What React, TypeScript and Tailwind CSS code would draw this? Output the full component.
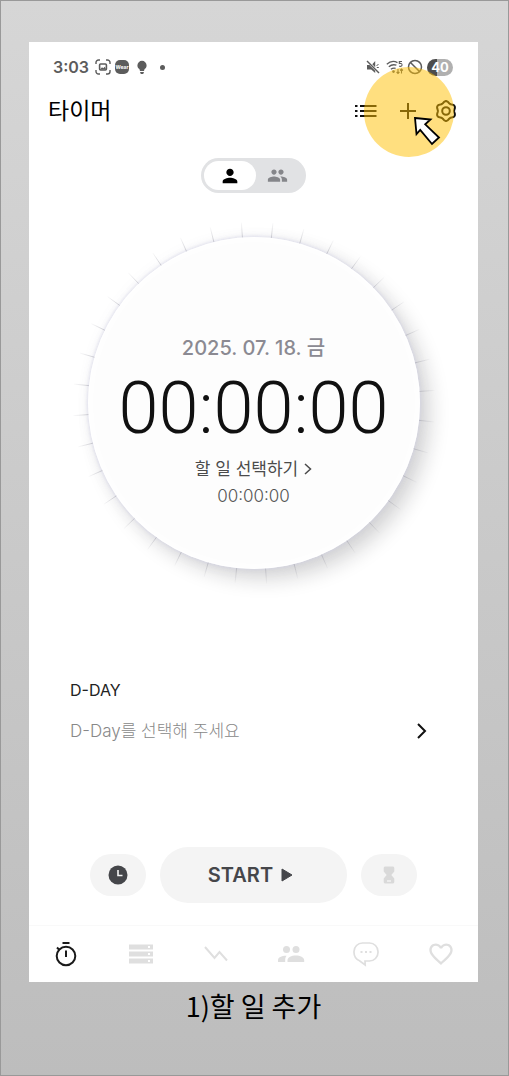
import type { ReactNode } from "react";
import { MdFavoriteBorder, MdGroup, MdPerson } from "react-icons/md";

const TICKS = Array.from({ length: 36 }, (_, i) => i * 10 - 4);

// six soft lobes around a 24px box
const GEAR =
  Array.from({ length: 72 }, (_, i) => {
    const a = (i * 5 * Math.PI) / 180;
    const r = 9 + 0.9 * Math.cos(6 * a);
    return `${i ? "L" : "M"}${(12 + r * Math.sin(a)).toFixed(2)} ${(12 - r * Math.cos(a)).toFixed(2)}`;
  }).join("") + "Z";

function StatusBar() {
  return (
    <div className="flex h-[18px] items-center justify-between pl-6 pr-[25px] text-[#5c5c5c]">
      <div className="flex items-center">
        <span className="font-[Inter] text-[16px] font-semibold leading-[18px]">3:03</span>
        <svg className="ml-[6px] h-4 w-4" viewBox="0 0 16 16" fill="none" stroke="currentColor" strokeWidth="1.4">
          <path d="M1 5V3.5A2.5 2.5 0 0 1 3.5 1H5M11 1h1.500A2.500 2.500 0 0 1 15 3.500V5M15 11v1.500a2.500 2.500 0 0 1-2.500 2.500H11M5 15H3.500A2.500 2.500 0 0 1 1 12.500V11" />
          <rect x="4.600" y="5" width="6.800" height="6" rx="1" strokeWidth="1.600" />
          <path d="M5 10.500l2-2.200 1.300 1 1.400-1.500 1.500 2.700z" fill="currentColor" stroke="none" />
        </svg>
        <span className="ml-1 flex h-[14px] w-[14px] items-center justify-center rounded-[5px] bg-[#5c5c5c] font-[Inter] text-[5px] font-bold leading-none text-white">
          Wear
        </span>
        <svg className="ml-[7px] h-[15px] w-3" viewBox="0 0 12 15" fill="currentColor">
          <path d="M6 .8a4.600 4.600 0 0 1 4.600 4.600c0 1.700-.9 2.900-2 3.700L8 11H4l-.6-1.900c-1.100-.8-2-2-2-3.700A4.600 4.600 0 0 1 6 .8zM4 12.100h4L7.200 14H4.800z" />
        </svg>
        <span className="ml-[12px] h-[5px] w-[5px] rounded-full bg-[#5c5c5c]" />
      </div>
      <div className="flex items-center">
        <svg className="h-[14px] w-[14px]" viewBox="0 0 14 14" fill="currentColor">
          <path d="M1 5h2.500l3 3 2.700 2.700V13L5.200 9.500H1zM9.200 1v6.200L6.300 4.200z" />
          <path d="M1 1l12 12" stroke="currentColor" strokeWidth="1.400" />
          <path d="M10.500 5.500l2-1M10.800 7.500h2" stroke="currentColor" strokeWidth="1" />
        </svg>
        <svg className="ml-[6px] h-4 w-[18px]" viewBox="0 0 18 16" fill="none" stroke="currentColor" strokeWidth="1.300">
          <path d="M.8 5.200C4 2.300 8 1.800 11.500 3.600M2.800 7.800c2.300-2 5-2.500 7.600-1.600M4.900 10.300c1.500-1.200 3.200-1.500 4.700-1" />
          <circle cx="7.500" cy="12.600" r="1.300" fill="currentColor" stroke="none" />
          <path d="M16 2.500h-2.700v2c1.800-.4 2.900.2 2.700 1.600-.1 1.300-1.700 1.600-2.900.9" strokeWidth="1.100" />
          <path d="M12 10v4.500M10.600 13l1.400 1.500 1.400-1.500M15.500 14.500V10M14.100 11.500l1.400-1.500 1.400 1.500" strokeWidth="1.100" />
        </svg>
        <svg className="ml-[3px] h-4 w-4" viewBox="0 0 16 16" fill="none" stroke="currentColor" strokeWidth="1.500">
          <circle cx="8" cy="8" r="6.500" />
          <path d="M3.500 3.500l9 9" />
        </svg>
        <span className="ml-1 flex h-[17px] w-[26px] items-center justify-center rounded-full bg-linear-to-r from-[#4d4d4d] from-40% to-[#b0b0b0] to-40% font-[Inter] text-[13px] font-bold leading-none text-white">
          40
        </span>
      </div>
    </div>
  );
}

function Header() {
  return (
    <header className="mt-[15px] flex h-10 items-center justify-between pl-[19px] pr-5">
      <h1 className="text-[23px] font-normal leading-8 text-[#000]">타이머</h1>
      <div className="flex items-center">
        <button type="button" aria-label="목록" className="block">
          <svg className="h-6 w-6" viewBox="0 0 24 24" stroke="#111" strokeWidth="2">
            <path d="M1 7h2.500M6 7h16.500M1 12h2.500M6 12h16.500M1 17h2.500M6 17h16.500" />
          </svg>
        </button>
        <div className="relative ml-[18px]">
          <button type="button" aria-label="할 일 추가" className="block">
            <svg className="h-6 w-6" viewBox="0 0 24 24" stroke="#111" strokeWidth="2">
              <path d="M12 4v16M4 12h16" />
            </svg>
          </button>
          {/* tutorial highlight and pointer */}
          <span className="pointer-events-none absolute -left-8 -top-8 z-10 h-[90px] w-[90px] rounded-full bg-[#ffc000]/50" />
          <svg className="pointer-events-none absolute left-4 top-4 z-20 h-8 w-8" viewBox="0 0 32 32">
            <path d="M3 3l15.500 1.500-5.300 4.800L27 22.500 20 29 8.200 14.800 4.500 19z" fill="#fff" stroke="#000" strokeWidth="1.800" />
          </svg>
        </div>
        <button type="button" aria-label="설정" className="relative ml-[14px] block">
          <svg className="h-6 w-6" viewBox="0 0 24 24" fill="none" stroke="#111" strokeWidth="2">
            <path d={GEAR} strokeLinejoin="round" />
            <circle cx="12" cy="12" r="3.800" />
          </svg>
        </button>
      </div>
    </header>
  );
}

function Dial() {
  return (
    <section className="relative mx-auto mt-11 flex h-[332px] w-[332px] flex-col items-center rounded-full bg-[#fdfdfd] pt-[95px] shadow-[0_0_3px_1px_rgba(210,210,230,0.6),10px_10px_20px_rgba(20,20,30,0.18),0_0_14px_rgba(120,120,150,0.06),inset_0_0_10px_3px_#fff]">
      <svg className="pointer-events-none absolute -inset-4 h-[364px] w-[364px]" viewBox="-182 -182 364 364">
        <defs>
          <radialGradient id="tick" gradientUnits="userSpaceOnUse" cx="0" cy="0" r="181">
            <stop offset="0.910" stopColor="#8c8c98" stopOpacity="0.500" />
            <stop offset="1" stopColor="#8c8c98" stopOpacity="0.050" />
          </radialGradient>
        </defs>
        {TICKS.map((a) => (
          <path key={a} d="M0 -166L0.010 -181" transform={`rotate(${a})`} stroke="url(#tick)" strokeWidth="0.800" />
        ))}
      </svg>
      <p className="text-[20px] font-medium leading-8 text-[#8b8a92]">2025. 07. 18. 금</p>
      <p className="mt-[7px] font-[Roboto] text-[72px] font-light leading-[76px] text-[#111]">00:00:00</p>
      <button type="button" className="mt-2 flex h-7 items-center text-[17px] leading-7 text-[#4b4b4b]">
        할 일 선택하기
        <svg className="ml-[6px] h-3 w-2" viewBox="0 0 8 12" fill="none" stroke="currentColor" strokeWidth="1.500">
          <path d="M1 1l5.500 5L1 11" />
        </svg>
      </button>
      <p className="mt-px text-[17px] font-light leading-6 text-[#555]">00:00:00</p>
    </section>
  );
}

function NavItem({ label, active, children }: { label: string; active?: boolean; children: ReactNode }) {
  return (
    <a
      href="#"
      aria-label={label}
      aria-current={active ? "page" : undefined}
      className={active ? "flex items-center justify-center text-[#1a1a1a]" : "flex items-center justify-center text-[#dfdfdf]"}
    >
      {children}
    </a>
  );
}

function BottomNav() {
  return (
    <nav className="mt-[22px] grid h-[57px] grid-cols-6 border-t border-[#f9f9f9]">
      <NavItem label="타이머" active>
        <svg className="h-[26px] w-[26px]" viewBox="0 0 26 26" fill="none" stroke="currentColor" strokeWidth="2">
          <circle cx="13" cy="15" r="9.300" />
          <path d="M9.500 2h7M13 9.500V16M4 6.500l2.500 2.500" />
        </svg>
      </NavItem>
      <NavItem label="할 일">
        <svg className="h-6 w-6" viewBox="0 0 24 24" fill="currentColor">
          <path d="M0 2.500h24v5H0zM0 9.500h24v5H0zM0 16.500h24v5H0z" />
          <path d="M19 4h2v2h-2zM19 11h2v2h-2zM19 18h2v2h-2z" fill="#fff" />
        </svg>
      </NavItem>
      <NavItem label="통계">
        <svg className="h-6 w-6" viewBox="0 0 24 24" fill="none" stroke="currentColor" strokeWidth="2">
          <path d="M1 5l9.500 11 5-6L23 18.500" />
        </svg>
      </NavItem>
      <NavItem label="그룹">
        <svg className="h-6 w-7" viewBox="0 0 28 24" fill="currentColor">
          <circle cx="9.500" cy="7.500" r="3.500" />
          <circle cx="19" cy="7.500" r="3.500" />
          <path d="M10.500 20v-1.800c0-3 4-4.700 8.300-4.700s8.400 1.700 8.400 4.700V20zM1 20v-1.800c0-3 4-4.700 8.700-4.500-1 1-1.500 2.300-1.500 4V20z" />
        </svg>
      </NavItem>
      <NavItem label="채팅">
        <svg className="h-[26px] w-7" viewBox="0 0 28 26" fill="none" stroke="currentColor" strokeWidth="1.700">
          <path d="M10.500 2h7a8.500 8.500 0 0 1 8.500 8.500v1a8.500 8.500 0 0 1-8.500 8.500h-4.500l.2 4L7.500 19.700A9 9 0 0 1 2 11.500v-1A8.500 8.500 0 0 1 10.500 2z" />
          <path d="M8.500 11h2M13 11h2M17.500 11h2" strokeWidth="2" />
        </svg>
      </NavItem>
      <NavItem label="좋아요">
        <MdFavoriteBorder className="h-7 w-7" />
      </NavItem>
    </nav>
  );
}

export default function App() {
  return (
    <div className="flex min-h-screen flex-col border border-[#999] bg-linear-to-b from-[#d6d6d6] to-[#bdbdbd] pl-7 pr-[30px] pt-[41px] font-[Inter,'Noto_Sans_CJK_KR',sans-serif]">
      <main className="bg-white pt-4">
        <StatusBar />
        <Header />

        <div className="mx-auto mt-[27px] flex h-[35px] w-[105px] items-center rounded-full bg-[#e1e2e4] p-[3px]">
          <button type="button" aria-label="개인" aria-pressed="true" className="flex h-[29px] w-[52px] items-center justify-center rounded-full bg-white">
            <MdPerson className="h-[22px] w-[22px] text-black" />
          </button>
          <button type="button" aria-label="그룹" aria-pressed="false" className="flex flex-1 items-center justify-center pr-1">
            <MdGroup className="h-[21px] w-[21px] text-[#85868a]" />
          </button>
        </div>

        <Dial />

        <section className="mt-[109px] pl-[41px] pr-[50px]">
          <h2 className="text-[16px] leading-6 text-[#222]">D-DAY</h2>
          <button type="button" className="mt-[13px] flex h-8 w-full items-center justify-between text-[17px] font-light leading-8 text-[#888]">
            D-Day를 선택해 주세요
            <svg className="h-4 w-[11px]" viewBox="0 0 11 16" fill="none" stroke="#111" strokeWidth="2">
              <path d="M1 1l7 7-7 7" />
            </svg>
          </button>
        </section>

        <div className="mt-[100px] flex h-14 items-center justify-center gap-[14px]">
          <button type="button" aria-label="시간 기록" className="flex h-[42px] w-14 items-center justify-center rounded-full bg-[#f4f4f4]">
            <svg className="h-5 w-5" viewBox="0 0 20 20">
              <circle cx="10" cy="10" r="9.500" fill="#45464a" />
              <path d="M10 5v5.500h4.500" fill="none" stroke="#f4f4f4" strokeWidth="1.600" />
            </svg>
          </button>
          <button type="button" className="flex h-14 w-[187px] items-center justify-center gap-2 rounded-full bg-[#f4f4f4] pr-[6px] text-[20px] font-semibold leading-7 text-[#45464a]">
            START
            <svg className="h-[14px] w-3" viewBox="0 0 12 14" fill="currentColor" stroke="currentColor" strokeLinejoin="round">
              <path d="M1 1l10 6-10 6z" />
            </svg>
          </button>
          <button type="button" aria-label="카운트다운" className="flex h-[42px] w-14 items-center justify-center rounded-full bg-[#f4f4f4]">
            <svg className="h-[18px] w-3" viewBox="0 0 12 18" fill="#d9d9d9">
              <path d="M2 .5h8A1.500 1.500 0 0 1 11.300 2v3.500L8.300 9l3 3.500V16a1.500 1.500 0 0 1-1.300 1.500H2A1.500 1.500 0 0 1 .7 16v-3.500l3-3.500-3-3.500V2A1.500 1.500 0 0 1 2 .5z" />
              <path d="M4 15h4" stroke="#f4f4f4" strokeWidth="1.400" />
            </svg>
          </button>
        </div>

        <BottomNav />
      </main>
      <p className="mt-2 text-center font-['Noto_Sans_CJK_KR',sans-serif] text-[27px] leading-8 text-black">1)할 일 추가</p>
    </div>
  );
}
